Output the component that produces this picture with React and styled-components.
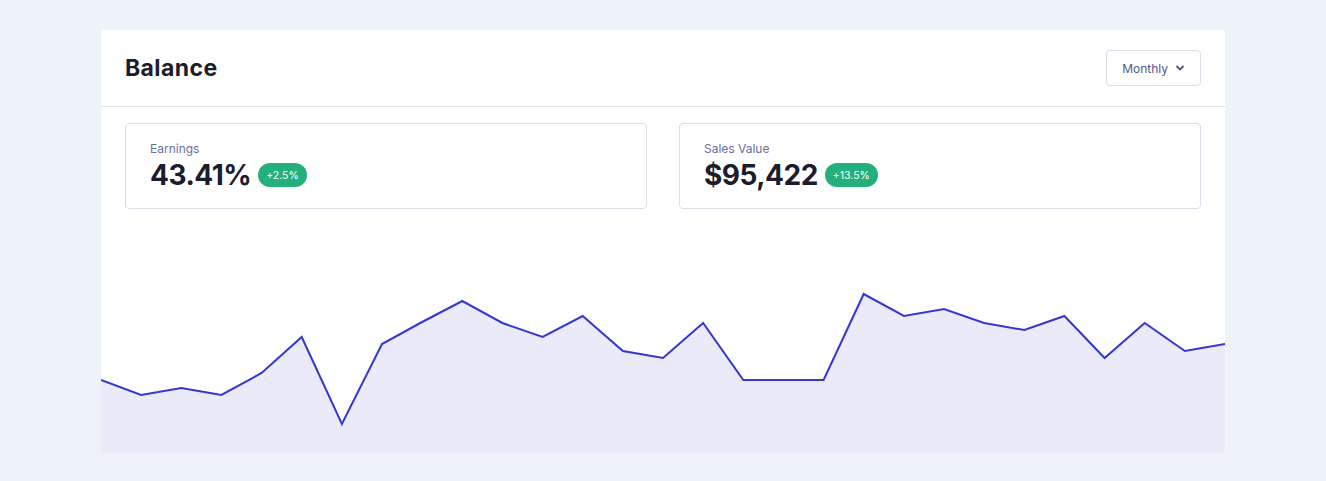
import React from 'react';
import styled, { createGlobalStyle } from 'styled-components';

const GlobalStyle = createGlobalStyle`
  body {
    margin: 0;
    background: #eef2f9;
    font-family: Inter, 'Noto Sans', sans-serif;
  }
`;

const StyledCard = styled.section`
  width: 1124px;
  margin: 30px auto 0;
  background: #fff;
  border-radius: 3px;
  overflow: hidden;
`;

const StyledHeader = styled.header`
  display: flex;
  align-items: center;
  justify-content: space-between;
  height: 76px;
  padding: 0 24px;
  border-bottom: 1px solid #e0e1ea;

  h2 {
    margin: 0;
    font-size: 23px;
    font-weight: 700;
    color: #1b1c2c;
    letter-spacing: 0.4px;
  }
`;

const StyledButton = styled.button`
  display: flex;
  align-items: center;
  gap: 7px;
  height: 36px;
  padding: 0 15px;
  border: 1px solid #dcdde8;
  border-radius: 4px;
  background: #fff;
  font-family: inherit;
  font-size: 12px;
  color: #52568f;
  cursor: pointer;
`;

const StyledStats = styled.div`
  display: grid;
  grid-template-columns: 1fr 1fr;
  grid-gap: 32px;
  padding: 16px 24px 0;
`;

const StyledStat = styled.div`
  height: 86px;
  box-sizing: border-box;
  padding: 17px 24px 0;
  border: 1px solid #dcdde8;
  border-radius: 4px;

  .label {
    font-size: 12px;
    line-height: 16px;
    color: #6a6ea6;
  }

  .row {
    display: flex;
    align-items: center;
    gap: 7px;
    margin-top: 1px;
  }

  .value {
    font-size: 28px;
    line-height: 34px;
    font-weight: 700;
    color: #1b1c2c;
    letter-spacing: -0.5px;
  }
`;

const Badge = styled.span`
  display: inline-flex;
  align-items: center;
  height: 24px;
  padding: 0 8px;
  border-radius: 12px;
  background: ${({ tone }) => (tone === 'down' ? '#e5484d' : '#23b07d')};
  color: #fff;
  font-size: 10.5px;
`;

const StyledChart = styled.svg`
  display: block;
  width: 100%;
  height: 244px;
`;

const values = [
  380, 395, 388, 395, 373, 337, 424, 344, 322, 301, 323, 337, 316, 351, 358,
  323, 380, 380, 380, 294, 316, 309, 323, 330, 316, 358, 323, 351, 344,
];

const Chart = () => {
  const w = 1124;
  const h = 244;
  const step = w / (values.length - 1);
  const pts = values.map((v, i) => [i * step, v - 209]);
  const line = pts.map(([x, y], i) => `${i ? 'L' : 'M'}${x.toFixed(1)} ${y}`).join(' ');
  const area = `${line} L${w} ${h} L0 ${h} Z`;

  return (
    <StyledChart viewBox={`0 0 ${w} ${h}`} preserveAspectRatio="none">
      <path d={area} fill="#ebeaf9" />
      <path d={line} fill="none" stroke="#3538cf" strokeWidth="2" strokeLinejoin="miter" />
    </StyledChart>
  );
};

const stats = [
  { label: 'Earnings', value: '43.41%', change: '+2.5%' },
  { label: 'Sales Value', value: '$95,422', change: '+13.5%' },
];

const App = () => (
  <>
    <GlobalStyle />
    <StyledCard>
      <StyledHeader>
        <h2>Balance</h2>
        <StyledButton>
          Monthly
          <svg width="10" height="10" viewBox="0 0 10 10">
            <path d="M2 3.5 L5 6.5 L8 3.5" fill="none" stroke="#52568f" strokeWidth="1.8" strokeLinecap="round" strokeLinejoin="round" />
          </svg>
        </StyledButton>
      </StyledHeader>

      <StyledStats>
        {stats.map(s => (
          <StyledStat key={s.label}>
            <div className="label">{s.label}</div>
            <div className="row">
              <span className="value">{s.value}</span>
              <Badge>{s.change}</Badge>
            </div>
          </StyledStat>
        ))}
      </StyledStats>

      <Chart />
    </StyledCard>
  </>
);

export default App;
